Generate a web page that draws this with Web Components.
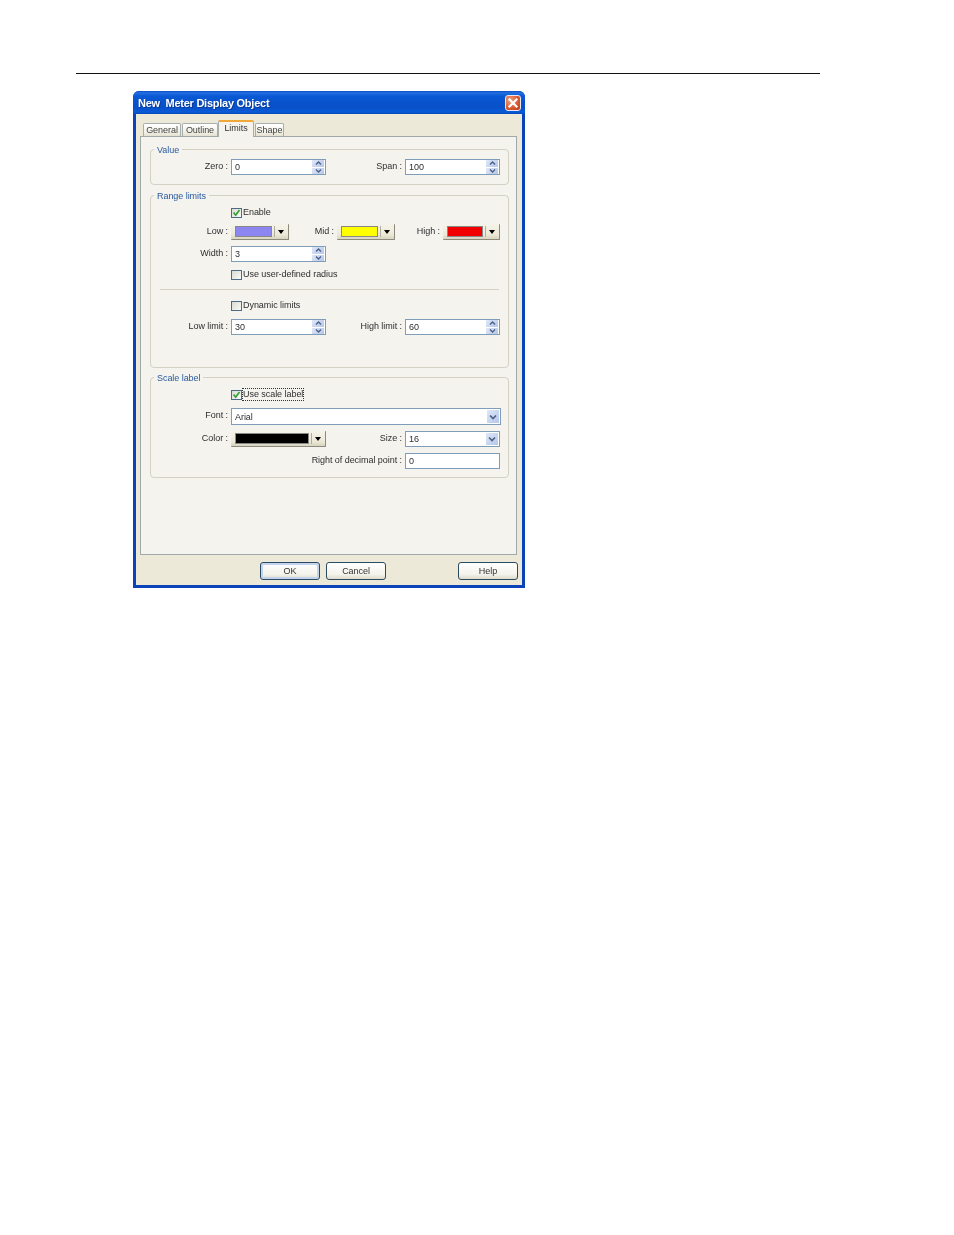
<!DOCTYPE html>
<html>
<head>
<meta charset="utf-8">
<style>
  html, body { margin: 0; background: #fff; }
  body { padding: 73px 0 0 76px; height: 1162px; box-sizing: content-box; overflow: hidden; }
  .rule { height: 1px; width: 744px; background: #111; }
  xp-dialog { margin: 17px 0 0 57px; }
  .mt6 { margin-top: 6px; } .mt7 { margin-top: 7px; } .mt8 { margin-top: 8px; }
  .mt9 { margin-top: 9px; } .mt10 { margin-top: 10px; }
</style>
</head>
<body>
<div class="rule"></div>

<xp-dialog heading="New  Meter Display Object">
  <xp-tab slot="tabs" style="width:38px">General</xp-tab>
  <xp-tab slot="tabs" style="width:36px;margin-left:1px">Outline</xp-tab>
  <xp-tab slot="tabs" active style="width:36px">Limits</xp-tab>
  <xp-tab slot="tabs" style="width:29px;margin-left:1px">Shape</xp-tab>

  <xp-group legend="Value" style="height:36px;padding-top:9px">
    <xp-row>
      <xp-field label="Zero :" lw="77"><xp-spin value="0"></xp-spin></xp-field>
      <xp-field label="Span :" lw="76"><xp-spin value="100"></xp-spin></xp-field>
    </xp-row>
  </xp-group>

  <xp-group legend="Range limits" style="height:173px;margin-top:10px;padding-top:11px">
    <xp-check checked>Enable</xp-check>
    <xp-row style="margin-top:6px">
      <xp-field label="Low :" lw="77"><xp-color color="#8c86f0" style="width:58px"></xp-color></xp-field>
      <xp-field label="Mid :" lw="45"><xp-color color="#ffff00" style="width:58px"></xp-color></xp-field>
      <xp-field label="High :" lw="45"><xp-color color="#f00000" style="width:57px"></xp-color></xp-field>
    </xp-row>
    <xp-row class="mt6">
      <xp-field label="Width :" lw="77"><xp-spin value="3"></xp-spin></xp-field>
    </xp-row>
    <xp-check class="mt7">Use user-defined radius</xp-check>
    <xp-sep class="mt9"></xp-sep>
    <xp-check class="mt10">Dynamic limits</xp-check>
    <xp-row class="mt8">
      <xp-field label="Low limit :" lw="77"><xp-spin value="30"></xp-spin></xp-field>
      <xp-field label="High limit :" lw="76"><xp-spin value="60"></xp-spin></xp-field>
    </xp-row>
  </xp-group>

  <xp-group legend="Scale label" style="height:101px;margin-top:9px;padding-top:11px">
    <xp-check checked focused>Use scale label</xp-check>
    <xp-row class="mt8">
      <xp-field label="Font :" lw="77"><xp-select value="Arial" style="width:270px;height:17px"></xp-select></xp-field>
    </xp-row>
    <xp-row class="mt6">
      <xp-field label="Color :" lw="77"><xp-color color="#000000" style="width:95px"></xp-color></xp-field>
      <xp-field label="Size :" lw="76"><xp-select value="16" style="width:95px"></xp-select></xp-field>
    </xp-row>
    <xp-row class="mt6">
      <xp-field label="Right of decimal point :" lw="251"><xp-spin value="0" plain></xp-spin></xp-field>
    </xp-row>
  </xp-group>

  <xp-button slot="buttons" default style="margin-left:120px">OK</xp-button>
  <xp-button slot="buttons" style="margin-left:6px">Cancel</xp-button>
  <xp-button slot="buttons" style="margin-left:72px">Help</xp-button>
</xp-dialog>

<script>
const UI_FONT = '"Liberation Sans", Arial, sans-serif';

class XpDialog extends HTMLElement {
  constructor() {
    super();
    this.attachShadow({ mode: 'open' });
  }
  connectedCallback() {
    this.shadowRoot.innerHTML = `
      <style>
        :host {
          display: block; width: 392px; height: 497px; box-sizing: border-box;
          background: #0a44b8; border-radius: 6px 6px 0 0; padding: 0 3px 3px;
          font: 9px ${UI_FONT}; letter-spacing: -.05px; color: #2e2e2e; filter: blur(.3px);
        }
        .title {
          height: 23px; margin: 0 -3px; padding: 0 4px 0 5px; display: flex; align-items: center;
          justify-content: space-between; border-radius: 6px 6px 0 0;
          background: linear-gradient(#0a50c8 0, #2470e0 2px, #0a58d4 5px, #0750c8 16px, #0a5ad8 21px, #0748b8 23px);
        }
        .title span {
          color: #fff; font: bold 11px "Liberation Sans", sans-serif; white-space: pre;
          letter-spacing: -.25px; text-shadow: 1px 1px 0 #0a3a9a;
        }
        .close {
          width: 16px; height: 16px; border-radius: 3px; border: 1px solid #e8e8f0; box-sizing: border-box;
          background: radial-gradient(circle at 30% 30%, #f0a080, #d8562e 60%, #c03c1c);
          display: flex; align-items: center; justify-content: center;
        }
        .client { height: 471px; background: #ece9d8; padding: 7px 4px 0; box-sizing: border-box; }
        .tabs { display: flex; align-items: flex-end; height: 15px; padding-left: 3px; position: relative; z-index: 1; }
        .panel {
          width: 377px; height: 419px; box-sizing: border-box; background: #f4f3ee;
          border: 1px solid #a0a8a8; padding: 12px 7px 0 9px;
        }
        .buttons { display: flex; margin-top: 7px; }
      </style>
      <div class="title">
        <span>${this.getAttribute('heading')}</span>
        <div class="close">
          <svg width="12" height="12" viewBox="0 0 12 12"><path d="M2.5 2.5l7 7M9.5 2.5l-7 7" stroke="#fff" stroke-width="2.2" stroke-linecap="square"/></svg>
        </div>
      </div>
      <div class="client">
        <div class="tabs"><slot name="tabs"></slot></div>
        <div class="panel"><slot></slot></div>
        <div class="buttons"><slot name="buttons"></slot></div>
      </div>`;
  }
}

class XpTab extends HTMLElement {
  constructor() {
    super();
    this.attachShadow({ mode: 'open' });
  }
  connectedCallback() {
    this.shadowRoot.innerHTML = `
      <style>
        :host {
          display: flex; height: 13px; box-sizing: border-box; align-items: center; justify-content: center;
          border: 1px solid #a8aeae; border-bottom: 0; border-radius: 2px 2px 0 0; margin-bottom: 0; padding-bottom: 1px;
          background: linear-gradient(#fff, #f0efe4 70%, #e4e1d2); color: #444;
        }
        :host([active]) {
          height: 17px; margin-bottom: -1px; background: #f4f3ee; padding-bottom: 3px;
          border-top: 2px solid #f0a838; color: #333; position: relative;
        }
      </style><slot></slot>`;
  }
}

class XpGroup extends HTMLElement {
  constructor() {
    super();
    this.attachShadow({ mode: 'open' });
  }
  connectedCallback() {
    this.shadowRoot.innerHTML = `
      <style>
        :host {
          display: block; position: relative; width: 359px; box-sizing: border-box;
          border: 1px solid #d2d1c4; border-radius: 4px;
        }
        .legend {
          position: absolute; top: -5px; left: 3px; padding: 0 3px; background: #f4f3ee;
          color: #2a5a9e; line-height: 11px;
        }
      </style>
      <div class="legend">${this.getAttribute('legend')}</div>
      <slot></slot>`;
  }
}

class XpRow extends HTMLElement {
  constructor() {
    super();
    this.attachShadow({ mode: 'open' });
  }
  connectedCallback() {
    this.shadowRoot.innerHTML = `<style>:host { display: flex; align-items: flex-start; }</style><slot></slot>`;
  }
}

class XpField extends HTMLElement {
  constructor() {
    super();
    this.attachShadow({ mode: 'open' });
  }
  connectedCallback() {
    this.shadowRoot.innerHTML = `
      <style>
        :host { display: flex; align-items: flex-start; }
        label { width: ${this.getAttribute('lw')}px; text-align: right; margin-right: 3px; line-height: 15px; white-space: nowrap; flex: none; }
      </style>
      <label>${this.getAttribute('label')}</label><slot></slot>`;
  }
}

// text box, with spinner arrows unless "plain" is set
class XpSpin extends HTMLElement {
  constructor() {
    super();
    this.attachShadow({ mode: 'open' });
  }
  connectedCallback() {
    const plain = this.hasAttribute('plain');
    this.shadowRoot.innerHTML = `
      <style>
        :host {
          display: flex; width: 95px; height: 16px; box-sizing: border-box; background: #fff;
          border: 1px solid #7f9db9; align-items: center; justify-content: space-between; padding-left: 3px; line-height: 14px;
        }
        .btns { width: 12px; height: 14px; margin-right: 1px; display: flex; flex-direction: column; }
        .btns div { flex: 1; background: linear-gradient(135deg, #dfe8f8, #b4c6ea); display: flex; align-items: center; justify-content: center; border: 0 solid #fff; }
        .btns div + div { border-top-width: 1px; }
        path { fill: none; stroke: #4d6185; stroke-width: 1.4; }
      </style>
      <span>${this.getAttribute('value')}</span>
      ${plain ? '' : `<div class="btns">
        <div><svg width="7" height="4" viewBox="0 0 7 4"><path d="M1 3.5l2.5-2.5 2.5 2.5"/></svg></div>
        <div><svg width="7" height="4" viewBox="0 0 7 4"><path d="M1 .5l2.5 2.5 2.5-2.5"/></svg></div>
      </div>`}`;
  }
}

class XpSelect extends HTMLElement {
  constructor() {
    super();
    this.attachShadow({ mode: 'open' });
  }
  connectedCallback() {
    this.shadowRoot.innerHTML = `
      <style>
        :host {
          display: flex; height: 16px; box-sizing: border-box; background: #fff;
          border: 1px solid #7f9db9; align-items: center; justify-content: space-between; padding-left: 3px; line-height: 14px;
        }
        .arrow {
          width: 12px; height: calc(100% - 2px); margin-right: 1px; background: linear-gradient(135deg, #dfe8f8, #b4c6ea);
          display: flex; align-items: center; justify-content: center;
        }
        path { fill: none; stroke: #4d6185; stroke-width: 1.7; }
      </style>
      <span>${this.getAttribute('value')}</span>
      <div class="arrow"><svg width="8" height="6" viewBox="0 0 8 6"><path d="M1 1.5l3 3 3-3"/></svg></div>`;
  }
}

class XpColor extends HTMLElement {
  constructor() {
    super();
    this.attachShadow({ mode: 'open' });
  }
  connectedCallback() {
    this.shadowRoot.innerHTML = `
      <style>
        :host {
          display: flex; height: 16px; box-sizing: border-box; align-items: center; padding: 0 3px 0 4px;
          background: linear-gradient(#f6f4ea, #ece9d8 70%, #d8d4c0);
          border-right: 1px solid #8c8a7c; border-bottom: 1px solid #8c8a7c; border-radius: 1px;
        }
        .swatch { flex: 1; height: 9px; background: ${this.getAttribute('color')}; border: 1px solid #888; }
        .bar { width: 1px; height: 11px; background: #b0ae9e; margin: 0 3px 0 2px; }
        .tri { width: 0; height: 0; border: 3px solid transparent; border-top: 4px solid #000; border-bottom: 0; margin-right: 1px; }
      </style>
      <div class="swatch"></div><div class="bar"></div><div class="tri"></div>`;
  }
}

class XpCheck extends HTMLElement {
  constructor() {
    super();
    this.attachShadow({ mode: 'open' });
  }
  connectedCallback() {
    const checked = this.hasAttribute('checked');
    this.shadowRoot.innerHTML = `
      <style>
        :host { display: flex; height: 11px; padding-left: 80px; align-items: center; }
        .box {
          width: 11px; height: 10px; box-sizing: border-box; border: 1px solid #4a6c88; flex: none;
          background: linear-gradient(135deg, #dcdcd4, #fafaf8); margin-right: 1px;
          display: flex; align-items: center; justify-content: center;
        }
        .txt { line-height: 11px; white-space: nowrap; margin-top: -1px; }
        :host([focused]) .txt { outline: 1px dotted #333; }
        path { fill: none; stroke: #35a035; stroke-width: 1.6; }
      </style>
      <div class="box">${checked ? '<svg width="9" height="8" viewBox="0 0 9 8"><path d="M1.5 3.5l2.2 2.6 3.8-5"/></svg>' : ''}</div>
      <span class="txt"><slot></slot></span>`;
  }
}

class XpSep extends HTMLElement {
  constructor() {
    super();
    this.attachShadow({ mode: 'open' });
  }
  connectedCallback() {
    this.shadowRoot.innerHTML = `<style>:host { display: block; height: 1px; width: 339px; margin-left: 9px; background: #d2d1c4; }</style>`;
  }
}

class XpButton extends HTMLElement {
  constructor() {
    super();
    this.attachShadow({ mode: 'open' });
  }
  connectedCallback() {
    this.shadowRoot.innerHTML = `
      <style>
        :host {
          display: flex; width: 60px; height: 18px; box-sizing: border-box; align-items: center; justify-content: center;
          border: 1px solid #2c4a62; border-radius: 3px; color: #333;
          background: linear-gradient(#fff, #f4f3ec 70%, #dedbcc);
        }
        :host([default]) { box-shadow: inset 0 0 0 2px #c4d4ee; }
      </style><slot></slot>`;
  }
}

customElements.define('xp-dialog', XpDialog);
customElements.define('xp-tab', XpTab);
customElements.define('xp-group', XpGroup);
customElements.define('xp-row', XpRow);
customElements.define('xp-field', XpField);
customElements.define('xp-spin', XpSpin);
customElements.define('xp-select', XpSelect);
customElements.define('xp-color', XpColor);
customElements.define('xp-check', XpCheck);
customElements.define('xp-sep', XpSep);
customElements.define('xp-button', XpButton);
</script>
</body>
</html>
